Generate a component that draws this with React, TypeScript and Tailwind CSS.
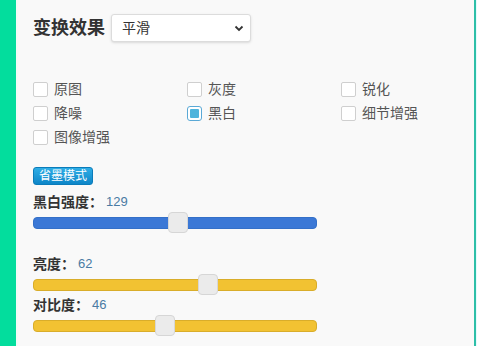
import React, { useState } from 'react';

const font = { fontFamily: '"Liberation Sans", "Noto Sans CJK SC", sans-serif' };

const options = ['原图', '灰度', '锐化', '降噪', '黑白', '细节增强', '图像增强'];

const Slider: React.FC<{ value: number; max: number; track: string }> = ({ value, max, track }) => {
    const pct = value / max;
    return (
        <div className="relative h-[21px] w-[284px] flex items-center">
            <div className={`h-3 w-full rounded-[4px] border ${track}`} />
            <div
                className="absolute top-0 h-[21px] w-[20px] rounded-[4px] border border-[#d6d6d6] bg-[#ebebeb]"
                style={{ left: `${pct * 264 + 1}px` }}
            />
        </div>
    );
};

const Label: React.FC<{ name: string; value: number; className?: string }> = ({ name, value, className = '' }) => (
    <div className={`flex h-5 items-center ${className}`}>
        <span className="text-[14px] font-bold text-[#333]">{name}</span>
        <span className="ml-[3px] text-[13px] text-[#4a7ba3]">{value}</span>
    </div>
);

const App: React.FC = () => {
    const [mode, setMode] = useState('黑白');

    return (
        <div className="flex h-[346px] w-[477px] overflow-hidden" style={font}>
            <div className="w-4 shrink-0 bg-[#03dd9d]" />
            <div className="w-[2px] shrink-0 bg-[#f2fbf8]" />
            <div className="min-w-0 flex-1 bg-[#f9f9f9] px-[15px] pt-[14px]">
                {/* header */}
                <div className="flex h-7 items-center gap-[6px]">
                    <span className="text-[18px] font-bold text-[#333]">变换效果</span>
                    <div className="flex h-7 w-[140px] items-center justify-between rounded-[3px] border border-[#dcdcdc] bg-white pl-[10px] pr-[6px] shadow-sm">
                        <span className="text-[14px] text-[#333]">平滑</span>
                        <svg width="10" height="10" viewBox="0 0 10 10">
                            <path d="M1.5 3.5 L5 7 L8.5 3.5" fill="none" stroke="#333" strokeWidth="1.8" />
                        </svg>
                    </div>
                </div>

                {/* modes */}
                <div className="mt-[35px] grid grid-cols-[154px_154px_1fr]">
                    {options.map((o) => (
                        <label key={o} className="flex h-6 cursor-pointer items-center gap-[6px]" onClick={() => setMode(o)}>
                            {mode === o ? (
                                <span className="flex h-[15px] w-[15px] items-center justify-center rounded-[3px] border border-[#5aa9d6] bg-white">
                                    <span className="h-[9px] w-[9px] rounded-[1px] bg-[#4fb4dc]" />
                                </span>
                            ) : (
                                <span className="h-[15px] w-[15px] rounded-[2px] border border-[#cfcfcf] bg-white" />
                            )}
                            <span className="text-[14px] text-[#555]">{o}</span>
                        </label>
                    ))}
                </div>

                <button className="mt-[18px] h-[18px] w-[60px] rounded-[3px] border border-[#0b7cba] bg-gradient-to-b from-[#2eaee6] to-[#0d86c8] text-[12px] leading-none text-white">
                    省墨模式
                </button>

                <Label name="黑白强度：" value={129} className="mt-[5px]" />
                <Slider value={129} max={255} track="border-[#3470c8] bg-[#3b78d6]" />

                <Label name="亮度：" value={62} className="mt-[21px]" />
                <Slider value={62} max={100} track="border-[#d9ad2a] bg-[#f2c232]" />

                <Label name="对比度：" value={46} />
                <Slider value={46} max={100} track="border-[#d9ad2a] bg-[#f2c232]" />
            </div>
            <div className="w-[2px] shrink-0 bg-[#2ebfa8]" />
            <div className="w-px shrink-0 bg-[#e6fbff]" />
        </div>
    );
};

export default App;
